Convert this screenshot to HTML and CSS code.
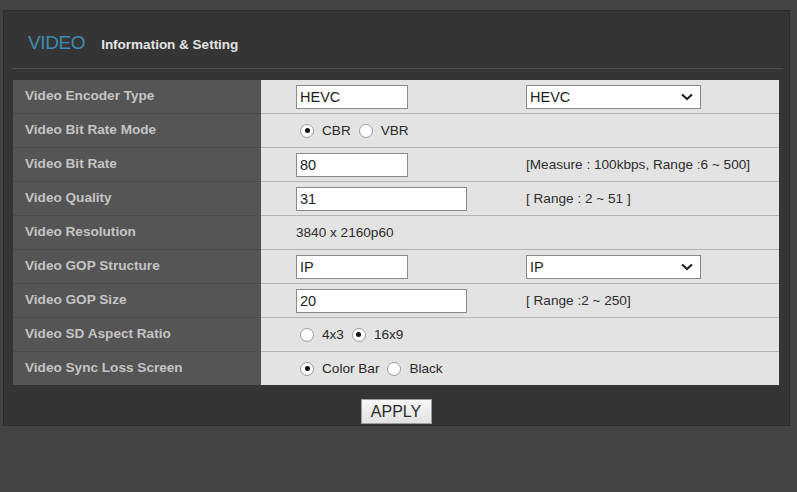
FILE: index.html
```html
<!DOCTYPE html>
<html>
<head>
<meta charset="utf-8">
<link rel="stylesheet" href="styles.css">
</head>
<body>
<div class="panel">
  <div class="header">
    <span class="title">VIDEO</span>
    <span class="subtitle">Information &amp; Setting</span>
  </div>
  <div class="sep"></div>
  <div class="table">
    <div class="row">
      <div class="label">Video Encoder Type</div>
      <div class="value">
        <div class="c1"><div class="input short">HEVC</div></div>
        <div class="c2"><div class="select">HEVC<svg class="chev" viewBox="0 0 12 8" width="12" height="8"><path d="M1 1.5 L6 6 L11 1.5" fill="none" stroke="#222" stroke-width="2.2"/></svg></div></div>
      </div>
    </div>
    <div class="row">
      <div class="label">Video Bit Rate Mode</div>
      <div class="value">
        <div class="radios"><span class="radio on"></span><span class="rl">CBR</span><span class="radio"></span><span class="rl">VBR</span></div>
      </div>
    </div>
    <div class="row">
      <div class="label">Video Bit Rate</div>
      <div class="value">
        <div class="c1"><div class="input short">80</div></div>
        <div class="c2 txt">[Measure : 100kbps, Range :6 ~ 500]</div>
      </div>
    </div>
    <div class="row">
      <div class="label">Video Quality</div>
      <div class="value">
        <div class="c1"><div class="input long">31</div></div>
        <div class="c2 txt">[ Range : 2 ~ 51 ]</div>
      </div>
    </div>
    <div class="row">
      <div class="label">Video Resolution</div>
      <div class="value">
        <div class="c1 txt">3840 x 2160p60</div>
      </div>
    </div>
    <div class="row">
      <div class="label">Video GOP Structure</div>
      <div class="value">
        <div class="c1"><div class="input short">IP</div></div>
        <div class="c2"><div class="select">IP<svg class="chev" viewBox="0 0 12 8" width="12" height="8"><path d="M1 1.5 L6 6 L11 1.5" fill="none" stroke="#222" stroke-width="2.2"/></svg></div></div>
      </div>
    </div>
    <div class="row">
      <div class="label">Video GOP Size</div>
      <div class="value">
        <div class="c1"><div class="input long">20</div></div>
        <div class="c2 txt">[ Range :2 ~ 250]</div>
      </div>
    </div>
    <div class="row">
      <div class="label">Video SD Aspect Ratio</div>
      <div class="value">
        <div class="radios"><span class="radio"></span><span class="rl">4x3</span><span class="radio on"></span><span class="rl">16x9</span></div>
      </div>
    </div>
    <div class="row last">
      <div class="label">Video Sync Loss Screen</div>
      <div class="value">
        <div class="radios"><span class="radio on"></span><span class="rl">Color Bar</span><span class="radio"></span><span class="rl">Black</span></div>
      </div>
    </div>
  </div>
  <div class="actions"><button class="apply">APPLY</button></div>
</div>
</body>
</html>
```

FILE: styles.css
```css
html, body {
  margin: 0;
  padding: 0;
}
body {
  background: #434343;
  font-family: "Liberation Sans", Arial, sans-serif;
  width: 797px;
  height: 492px;
  overflow: hidden;
}
.panel {
  margin: 10px 7px 0 3px;
  height: 414px;
  background: #353535;
  border: 1px solid #2b2b2b;
}
.header {
  display: flex;
  align-items: baseline;
  padding: 22px 0 0 24px;
  height: 35px;
  box-sizing: content-box;
}
.title {
  font-size: 19px;
  line-height: 20px;
  color: #3f8db3;
  letter-spacing: -0.4px;
}
.subtitle {
  margin-left: 16px;
  font-size: 13.5px;
  font-weight: bold;
  color: #e4e4e4;
}
.sep {
  height: 1px;
  background: #4d4d4d;
  margin: 0 6px 0 8px;
}
.table {
  margin: 11px 0 0 9px;
  width: 766px;
}
.row {
  display: flex;
  height: 34px;
}
.label {
  width: 248px;
  box-sizing: border-box;
  background: #555555;
  border-bottom: 1px solid #4a4a4a;
  color: #c4c4c4;
  font-size: 13.6px;
  font-weight: bold;
  padding-left: 12px;
  padding-bottom: 2px;
  display: flex;
  align-items: center;
}
.value {
  flex: 1;
  box-sizing: border-box;
  background: #e3e3e3;
  border-bottom: 1px solid #b3b3b3;
  display: flex;
  align-items: center;
  padding-left: 35px;
  color: #2a2a2a;
  font-size: 13.5px;
}
.row.last .label, .row.last .value {
  border-bottom: none;
  height: 33px;
}
.c1 {
  width: 230px;
  display: flex;
  align-items: center;
}
.c2 {
  display: flex;
  align-items: center;
}
.txt {
  font-size: 13.6px;
  color: #2e2e2e;
}
.input {
  height: 24px;
  box-sizing: border-box;
  background: #fff;
  border: 1px solid #8a8a8a;
  font-size: 14.5px;
  color: #1e1e1e;
  padding-left: 3px;
  display: flex;
  align-items: center;
}
.input.short { width: 112px; }
.input.long { width: 171px; }
.select {
  width: 175px;
  height: 24px;
  box-sizing: border-box;
  background: #fff;
  border: 1px solid #8a8a8a;
  font-size: 14.5px;
  color: #1e1e1e;
  padding-left: 3px;
  display: flex;
  align-items: center;
  justify-content: space-between;
}
.chev {
  margin-right: 7px;
}
.radios {
  display: flex;
  align-items: center;
}
.radio {
  width: 14px;
  height: 14px;
  box-sizing: border-box;
  border-radius: 50%;
  border: 1px solid #a0a0a0;
  background: radial-gradient(circle at 50% 40%, #ffffff 55%, #e8e8e8 100%);
  position: relative;
  margin-left: 5px;
}
.radio:first-child {
  margin-left: 4px;
}
.radio.on::after {
  content: "";
  position: absolute;
  left: 3.5px;
  top: 3.5px;
  width: 5px;
  height: 5px;
  border-radius: 50%;
  background: #111;
}
.rl {
  margin-left: 8px;
  margin-right: 3px;
  font-size: 13.6px;
  color: #2a2a2a;
}
.actions {
  display: flex;
  justify-content: center;
  width: 766px;
  margin: 13px 0 0 9px;
}
.apply {
  width: 71px;
  height: 25px;
  font-family: "Liberation Sans", Arial, sans-serif;
  font-size: 16px;
  color: #2b2b2b;
  background: linear-gradient(#f7f7f7, #e2e2e2);
  border: 1px solid #9c9c9c;
  border-radius: 0;
  padding: 0;
}
```
